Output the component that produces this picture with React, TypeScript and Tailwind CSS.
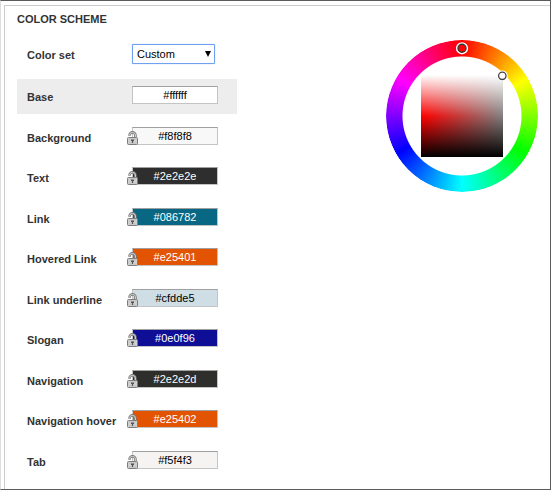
type Swatch = {
  label: string;
  value: string;
  field: string;
  locked: boolean;
};

const swatches: Swatch[] = [
  { label: "Base", value: "#ffffff", field: "bg-white text-black", locked: false },
  { label: "Background", value: "#f8f8f8", field: "bg-[#f8f8f8] text-black", locked: true },
  { label: "Text", value: "#2e2e2e", field: "bg-[#2e2e2e] text-white", locked: true },
  { label: "Link", value: "#086782", field: "bg-[#086782] text-white", locked: true },
  { label: "Hovered Link", value: "#e25401", field: "bg-[#e25401] text-white", locked: true },
  { label: "Link underline", value: "#cfdde5", field: "bg-[#cfdde5] text-black", locked: true },
  { label: "Slogan", value: "#0e0f96", field: "bg-[#0e0f96] text-white", locked: true },
  { label: "Navigation", value: "#2e2e2d", field: "bg-[#2e2e2d] text-white", locked: true },
  { label: "Navigation hover", value: "#e25402", field: "bg-[#e25402] text-white", locked: true },
  { label: "Tab", value: "#f5f4f3", field: "bg-[#f5f4f3] text-black", locked: true },
];

function LockIcon() {
  return (
    <svg viewBox="0 0 11 14" className="h-3.5 w-[11px]" aria-hidden="true">
      <path d="M2.6 4.8V4a2.9 2.6 0 0 1 5.8 0v3" fill="none" stroke="#777" strokeWidth="2.6" />
      <path d="M2.6 4.3V4a2.9 2.6 0 0 1 5.8 0v3" fill="none" stroke="#d6d6d6" strokeWidth="1" />
      <rect x="0.5" y="6.5" width="10" height="7" rx="1" fill="#d0d0d0" stroke="#7d7d7d" />
      <path d="M1.5 8h8M1.5 12h8" stroke="#bcbcbc" strokeWidth="0.8" />
      <path d="M4 8.6h3v1.3H6.1v2H4.9v-2H4z" fill="#555" />
    </svg>
  );
}

function SwatchRow({ label, value, field, locked }: Swatch) {
  const id = label.toLowerCase().replace(/ /g, "-");
  return (
    <div className={`flex h-[35px] w-[220px] items-start pl-2.5 ${locked ? "" : "bg-[#ededed]"}`}>
      <label htmlFor={id} className="w-[105px] pt-2.5 font-bold">
        {label}
      </label>
      <div className="relative pt-[7px]">
        <input
          id={id}
          type="text"
          defaultValue={value}
          className={`block h-[18px] w-[86px] border border-[#c4c4c4] border-t-[#a0a0a0] text-center outline-none ${field}`}
        />
        {locked && (
          <button type="button" aria-label={`Unlock ${label}`} className="absolute top-[11px] -left-[5px]">
            <LockIcon />
          </button>
        )}
      </div>
    </div>
  );
}

function ColorWheel() {
  return (
    <div className="relative grid size-[152px] shrink-0 place-items-center">
      <div className="absolute inset-0 rounded-full bg-[conic-gradient(#f00,#ff0,#0f0,#0ff,#00f,#f0f,#f00)] [mask-image:radial-gradient(circle,transparent_59px,black_60px)]" />
      <div className="size-[82px] bg-[linear-gradient(to_bottom,white,rgb(255_255_255/0)_50%,rgb(0_0_0/0)_50%,black),linear-gradient(to_right,#f00,#808080)]" />
      <svg viewBox="0 0 152 152" className="absolute inset-0 size-full" aria-hidden="true">
        <circle cx="76" cy="8.3" r="5" fill="#f00" stroke="#fff" strokeWidth="2.2" />
        <circle cx="76" cy="8.3" r="4" fill="none" stroke="#333" strokeWidth="1.4" />
        <circle cx="116.3" cy="35.8" r="4.6" fill="none" stroke="#fff" strokeWidth="1.6" />
        <circle cx="116.3" cy="35.8" r="3.7" fill="#fff" stroke="#444" strokeWidth="1.3" />
      </svg>
    </div>
  );
}

export default function App() {
  return (
    <div className="flex min-h-screen flex-col border border-[#5c5a5d] border-l-[#ddd] bg-white pt-1 pl-[3px] font-['Liberation_Sans',Arial,sans-serif] text-[11px] leading-4 text-[#333]">
      <main className="flex flex-1 items-start border-t border-l border-[#ccc] pt-[5px] pb-2.5 pl-3">
        <div className="flex flex-1 flex-col self-stretch">
          <h1 className="font-bold">COLOR SCHEME</h1>
          <div className="mt-[17px] flex items-center pl-2.5">
            <label htmlFor="color-set" className="w-[105px] pt-0.5 font-bold">
              Color set
            </label>
            <div className="relative">
              <select
                id="color-set"
                className="block h-5 w-[83px] appearance-none rounded-[1px] border border-[#6ea1f1] bg-white pl-1 text-black shadow-[0_0_1px_#6ea1f1] outline-none"
                defaultValue="Custom"
              >
                <option>Custom</option>
                <option>Default</option>
              </select>
              <svg viewBox="0 0 6 6" className="pointer-events-none absolute top-[7px] right-1 size-1.5" aria-hidden="true">
                <path d="M0 0h6L3 6z" fill="#000" />
              </svg>
            </div>
          </div>
          <div className="mt-[15px] flex flex-1 flex-col justify-between">
            {swatches.map((swatch) => (
              <SwatchRow key={swatch.label} {...swatch} />
            ))}
          </div>
        </div>
        <div className="pt-[29px] pr-3">
          <ColorWheel />
        </div>
      </main>
    </div>
  );
}
